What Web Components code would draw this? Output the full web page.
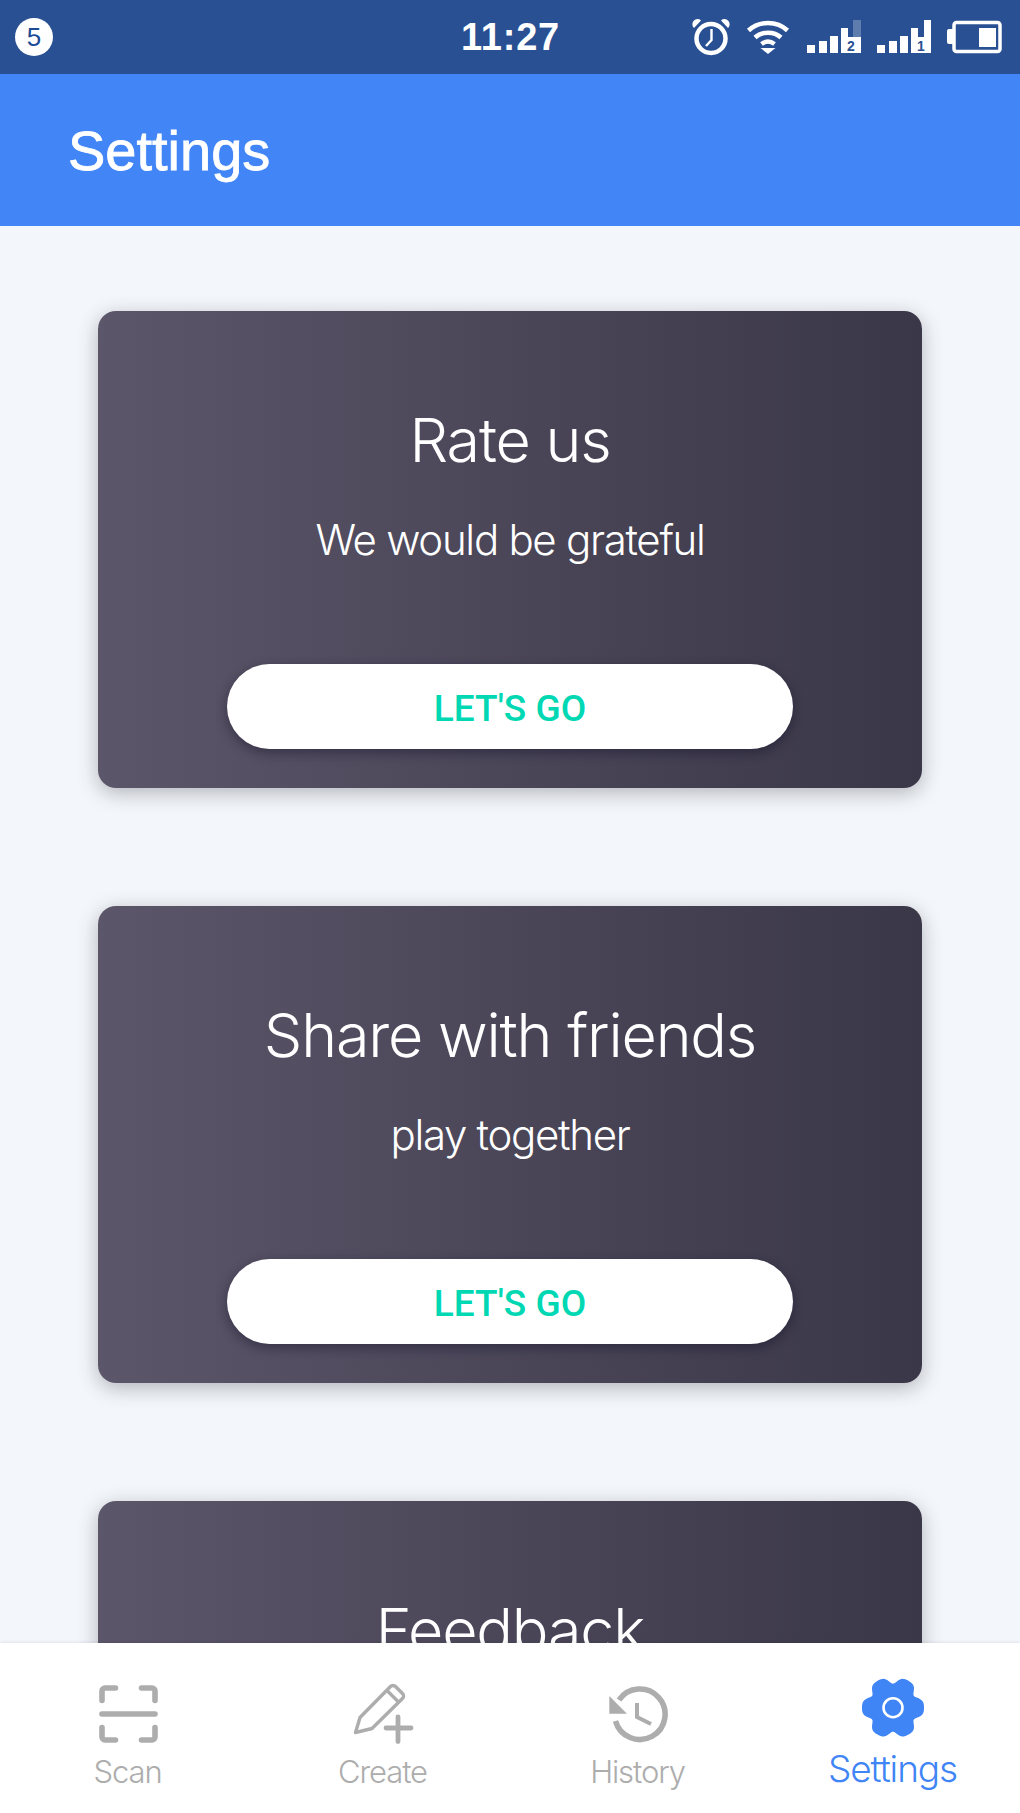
<!DOCTYPE html>
<html>
<head>
<meta charset="utf-8">
<title>Settings</title>
<style>
  html, body { margin: 0; height: 100%; }
  body { font-family: "Liberation Sans", sans-serif; }
</style>
</head>
<body>
<app-shell>
  <status-bar slot="status"></status-bar>
  <app-header slot="header">Settings</app-header>
  <promo-card>
    <span slot="title">Rate us</span>
    <span slot="subtitle">We would be grateful</span>
  </promo-card>
  <promo-card>
    <span slot="title">Share with friends</span>
    <span slot="subtitle">play together</span>
  </promo-card>
  <promo-card>
    <span slot="title">Feedback</span>
  </promo-card>
  <bottom-nav slot="nav">
    <nav-item icon="scan">Scan</nav-item>
    <nav-item icon="create">Create</nav-item>
    <nav-item icon="history">History</nav-item>
    <nav-item icon="settings" active>Settings</nav-item>
  </bottom-nav>
</app-shell>

<script>
  const gearPath = () => {
    const points = [];
    for (let i = 0; i < 180; i++) {
      const angle = (i / 180) * Math.PI * 2;
      const notch = Math.pow((1 - Math.cos(angle * 6)) / 2, 2.2);
      const radius = 31 - 7 * notch;
      points.push(`${(33 + radius * Math.cos(angle)).toFixed(2)} ${(29.7 + radius * Math.sin(angle)).toFixed(2)}`);
    }
    return `M${points.join('L')}Z`;
  };

  const ICONS = {
    scan: `
      <g fill="none" stroke="currentColor" stroke-width="5.6" stroke-linecap="round" stroke-linejoin="round">
        <path d="M7 22.5V13a3 3 0 0 1 3-3h10.5"/>
        <path d="M46.5 10H57a3 3 0 0 1 3 3v9.5"/>
        <path d="M7 36h53"/>
        <path d="M7 49.5V59a3 3 0 0 0 3 3h10.5"/>
        <path d="M46.5 62H57a3 3 0 0 0 3-3v-9.5"/>
      </g>`,
    create: `
      <g fill="none" stroke="currentColor" stroke-linejoin="round">
        <path stroke-width="3.4" d="M5.500 54.500 10 39.500 40.500 8.500a3.500 3.500 0 0 1 5 0l7 7a3.500 3.500 0 0 1 0 5L22 50.500z"/>
        <path stroke-width="3.4" d="M37.500 13 49 24.500"/>
        <path stroke-width="4.800" stroke-linecap="round" d="M36 50h25M48 39v24.500"/>
      </g>`,
    history: `
      <g transform="translate(0 2)">
        <path fill="currentColor" d="M4.300 16V33.700H22z"/>
        <path fill="none" stroke="currentColor" stroke-width="5.600" d="M14 20A25.250 25.250 0 1 1 10.500 41"/>
        <path fill="none" stroke="currentColor" stroke-width="4" d="M32 23V37L46 44"/>
      </g>`,
    settings: `
      <path fill="currentColor" d="${gearPath()}"/>
      <circle cx="33" cy="29.700" r="9.500" fill="none" stroke="#fff" stroke-width="2.600"/>`,
  };

  const defineShadow = (name, html, extend = {}) => {
    const template = document.createElement('template');
    template.innerHTML = html;
    class Element extends HTMLElement {
      constructor() {
        super();
        this.attachShadow({ mode: 'open' }).appendChild(template.content.cloneNode(true));
      }
      connectedCallback() {
        if (extend.connected) extend.connected.call(this);
      }
    }
    customElements.define(name, Element);
  };

  defineShadow('app-shell', `
    <style>
      :host { display: flex; flex-direction: column; height: 1813px; overflow: hidden; background: #f3f6fa; }
      main { flex: 1; min-height: 0; overflow: hidden; display: flex; flex-direction: column; gap: 118px; padding: 85px 98px 0; }
    </style>
    <slot name="status"></slot>
    <slot name="header"></slot>
    <main><slot></slot></main>
    <slot name="nav"></slot>
  `);

  defineShadow('status-bar', `
    <style>
      :host { display: grid; grid-template-columns: 1fr auto 1fr; align-items: center; height: 74px; padding: 0 18px 0 15px; box-sizing: border-box; background: #295093; color: #fff; }
      .badge { width: 38px; height: 38px; border-radius: 50%; background: #fff; color: #1c4a95; display: flex; align-items: center; justify-content: center; font: 26px "Liberation Sans", sans-serif; }
      .time { font: bold 38px "Liberation Sans", sans-serif; letter-spacing: .8px; padding-left: 4px; }
      .icons { display: flex; justify-content: flex-end; align-items: center; gap: 16px; height: 74px; }
      .alarm { margin-right: -1px; }
      svg { display: block; flex: none; }
      text { font: bold 14px "Liberation Sans", sans-serif; fill: #295093; }
    </style>
    <div><div class="badge">5</div></div>
    <div class="time">11:27</div>
    <div class="icons">
      <svg class="alarm" width="38" height="40" viewBox="0 0 38 40">
        <circle cx="19" cy="21.500" r="14.500" fill="none" stroke="#fff" stroke-width="4.500"/>
        <path d="M2 11 9 3.500a4.500 4.500 0 0 0-7 7.500zM36 11 29 3.500a4.500 4.500 0 0 1 7 7.500z" fill="#fff"/>
        <path d="M19.500 12V23L14 29" fill="none" stroke="#fff" stroke-width="2.400"/>
      </svg>
      <svg width="46" height="36" viewBox="0 0 44 36">
        <g fill="none" stroke="#fff" stroke-width="4.500">
          <path d="M2.500 11.500C13 1.500 31 1.500 41.500 11.500"/>
          <path d="M9 18.500C16 12 28 12 35 18.500"/>
          <path d="M15.500 25C19.500 22 24.500 22 28.500 25"/>
        </g>
        <path d="M14.500 29H29.500L22 35z" fill="#fff"/>
      </svg>
      <svg width="54" height="34" viewBox="0 0 54 34">
        <path fill="#fff" d="M0 25H8V33H0zM12 21H20V33H12zM23 16H31V33H23zM34 8H41V17H54V33H34z"/>
        <rect x="46" y="0" width="8" height="17" fill="#fff" opacity=".25"/>
        <text x="44" y="31" text-anchor="middle">2</text>
      </svg>
      <svg width="54" height="34" viewBox="0 0 54 34">
        <path fill="#fff" d="M0 25H8V33H0zM12 21H20V33H12zM23 16H31V33H23zM34 8H41V17H47V0H54V33H34z"/>
        <text x="44" y="31" text-anchor="middle">1</text>
      </svg>
      <svg width="55" height="34" viewBox="0 0 55 34">
        <rect x="0" y="9" width="7" height="15" rx="2" fill="#fff"/>
        <rect x="7" y="2.500" width="46" height="29" rx="2.500" fill="none" stroke="#fff" stroke-width="3.500"/>
        <rect x="32" y="8" width="17" height="19" fill="#fff"/>
      </svg>
    </div>
  `);

  defineShadow('app-header', `
    <style>
      :host { display: flex; align-items: center; height: 152px; padding-left: 68px; box-sizing: border-box; background: #4285f6; color: #fff; font: 56px "Liberation Sans", sans-serif; -webkit-text-stroke: .8px #fff; }
    </style>
    <slot></slot>
  `);

  defineShadow('promo-card', `
    <style>
      :host { display: flex; flex: none; flex-direction: column; align-items: center; height: 477px; padding: 93px 0 39px; box-sizing: border-box; border-radius: 18px; background: linear-gradient(90deg, #5b5669, #3a3748); box-shadow: 0 5px 20px rgba(50, 50, 60, .33); color: #fff; text-align: center; }
      .title { font: 300 61px/72px Inter, sans-serif; letter-spacing: -1.2px; }
      .subtitle { margin-top: 40px; min-height: 48px; font: 300 42px/48px Inter, sans-serif; letter-spacing: -1.3px; }
      button { margin-top: auto; width: 566px; height: 85px; padding: 3px 0 0; border: 0; border-radius: 43px; background: #fff; color: #00d8b4; font: 500 37px Roboto, sans-serif; box-shadow: 0 4px 12px rgba(20, 15, 40, .45); }
    </style>
    <div class="title"><slot name="title"></slot></div>
    <div class="subtitle"><slot name="subtitle"></slot></div>
    <button>LET'S GO</button>
  `);

  defineShadow('bottom-nav', `
    <style>
      :host { display: grid; grid-template-columns: repeat(4, 1fr); flex: none; height: 170px; padding-top: 35px; box-sizing: border-box; background: #fff; position: relative; box-shadow: 0 -1px 3px rgba(0, 0, 0, .08); }
    </style>
    <slot></slot>
  `);

  defineShadow('nav-item', `
    <style>
      :host { display: flex; flex-direction: column; align-items: center; color: #adadad; }
      :host([active]) { color: #3f85f5; }
      svg { display: block; width: 66px; height: 66px; flex: none; }
      .label { font: 300 31px/40px Inter, sans-serif; letter-spacing: -1.1px; margin-top: 8px; }
      :host([active]) .label { font-size: 37px; letter-spacing: -1.1px; margin-top: 5px; }
    </style>
    <svg viewBox="0 0 66 66"></svg>
    <div class="label"><slot></slot></div>
  `, {
    connected() {
      this.shadowRoot.querySelector('svg').innerHTML = ICONS[this.getAttribute('icon')];
    },
  });
</script>
</body>
</html>
